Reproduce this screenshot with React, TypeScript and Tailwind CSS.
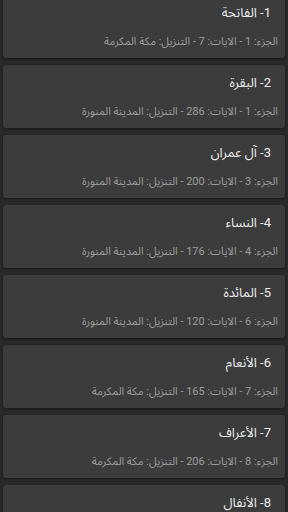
const surahs = [
  { n: 1, name: 'الفاتحة', juz: 1, ayat: 7, place: 'مكة المكرمة' },
  { n: 2, name: 'البقرة', juz: 1, ayat: 286, place: 'المدينة المنورة' },
  { n: 3, name: 'آل عمران', juz: 3, ayat: 200, place: 'المدينة المنورة' },
  { n: 4, name: 'النساء', juz: 4, ayat: 176, place: 'المدينة المنورة' },
  { n: 5, name: 'المائدة', juz: 6, ayat: 120, place: 'المدينة المنورة' },
  { n: 6, name: 'الأنعام', juz: 7, ayat: 165, place: 'مكة المكرمة' },
  { n: 7, name: 'الأعراف', juz: 8, ayat: 206, place: 'مكة المكرمة' },
  { n: 8, name: 'الأنفال', juz: 9, ayat: 75, place: 'المدينة المنورة' },
]

function SurahCard({ s }: { s: (typeof surahs)[number] }) {
  return (
    <div className="mx-[3px] h-[63px] shrink-0 rounded-[3px] bg-[#3c3c3c] shadow-[0_1px_3px_rgba(0,0,0,0.5)] flex flex-col">
      <div className="pr-[14px] pt-[9px] text-[13px] leading-[18px] text-[#ececec]">
        {s.n}- {s.name}
      </div>
      <div className="pr-[7px] pt-[12px] text-[11px] leading-[16px] text-[#9c9c9c]">
        الجزء: {s.juz} - الآيات: {s.ayat} - التنزيل: {s.place}
      </div>
    </div>
  )
}

export default function App() {
  return (
    <div
      dir="rtl"
      className="w-[288px] h-[512px] overflow-hidden bg-[#2a2a2a]"
      style={{ fontFamily: 'Roboto, "Noto Sans Arabic", "Noto Sans Arabic UI", "Noto Naskh Arabic", "DejaVu Sans", sans-serif' }}
    >
      <div className="-mt-[5px] flex flex-col gap-[7px]">
        {surahs.map((s) => (
          <SurahCard key={s.n} s={s} />
        ))}
      </div>
    </div>
  )
}
